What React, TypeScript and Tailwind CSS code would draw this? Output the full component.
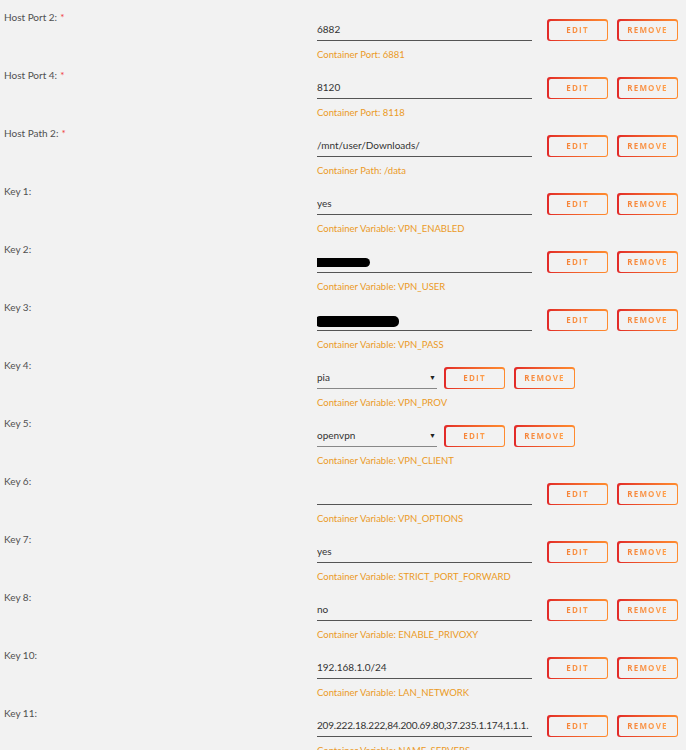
import React from 'react';

type Field = {
  label: string;
  required?: boolean;
  value?: string;
  redacted?: 'short' | 'long';
  select?: boolean;
  tight?: boolean;
  note: string;
};

const fields: Field[] = [
  { label: 'Host Port 2:', required: true, value: '6882', note: 'Container Port: 6881' },
  { label: 'Host Port 4:', required: true, value: '8120', note: 'Container Port: 8118' },
  { label: 'Host Path 2:', required: true, value: '/mnt/user/Downloads/', note: 'Container Path: /data' },
  { label: 'Key 1:', value: 'yes', note: 'Container Variable: VPN_ENABLED' },
  { label: 'Key 2:', redacted: 'short', note: 'Container Variable: VPN_USER' },
  { label: 'Key 3:', redacted: 'long', note: 'Container Variable: VPN_PASS' },
  { label: 'Key 4:', value: 'pia', select: true, note: 'Container Variable: VPN_PROV' },
  { label: 'Key 5:', value: 'openvpn', select: true, note: 'Container Variable: VPN_CLIENT' },
  { label: 'Key 6:', value: '', note: 'Container Variable: VPN_OPTIONS' },
  { label: 'Key 7:', value: 'yes', note: 'Container Variable: STRICT_PORT_FORWARD' },
  { label: 'Key 8:', value: 'no', note: 'Container Variable: ENABLE_PRIVOXY' },
  { label: 'Key 10:', value: '192.168.1.0/24', note: 'Container Variable: LAN_NETWORK' },
  {
    label: 'Key 11:',
    value: '209.222.18.222,84.200.69.80,37.235.1.174,1.1.1.',
    tight: true,
    note: 'Container Variable: NAME_SERVERS',
  },
];

const OutlineButton: React.FC<{ children: React.ReactNode }> = ({ children }) => (
  <button className="h-[22px] w-[61px] rounded-[3px] bg-gradient-to-r from-[#e22828] to-[#ff8c2f] p-[1.5px]">
    <span className="flex h-full w-full items-center justify-center rounded-[2px] bg-[#f2f2f2]">
      <span className="bg-gradient-to-r from-[#f5843a] to-[#ffa04c] bg-clip-text font-['Open_Sans',sans-serif] text-[8px] font-bold tracking-[1.2px] text-transparent">
        {children}
      </span>
    </span>
  </button>
);

const Row: React.FC<{ field: Field }> = ({ field }) => (
  <div className="flex h-[58px]">
    <div className="w-[317px] shrink-0 pl-[4px] pt-[11px] text-[10px] leading-[12px] text-[#505050]">
      {field.label}
      {field.required && <span className="ml-[3px] text-[#f03c3c]">*</span>}
    </div>
    <div className="pt-[19px]">
      <div className="flex h-[22px] items-start">
        {field.select ? (
          <div className="flex h-[22px] w-[120px] items-center justify-between border-b border-[#888] text-[10px] text-[#333]">
            <span>{field.value}</span>
            <span className="mr-[1px] text-[7px] text-[#222]">▼</span>
          </div>
        ) : (
          <div
            className={`flex h-[22px] w-[215px] items-center overflow-hidden whitespace-nowrap border-b border-[#555] text-[10px] text-[#333] ${
              field.tight ? 'tracking-[-0.2px]' : ''
            }`}
          >
            {field.redacted === 'short' && (
              <span className="mt-[1px] block h-[9px] w-[55px] -translate-x-[2px] rounded-l-[5px] rounded-r-full bg-black" />
            )}
            {field.redacted === 'long' && (
              <span className="mt-[4px] block h-[11px] w-[84px] -translate-x-[2px] rounded-[5px] bg-black" />
            )}
            {!field.redacted && field.value}
          </div>
        )}
        <div className={`flex gap-[9px] ${field.select ? 'ml-[7px]' : 'ml-[15px]'}`}>
          <OutlineButton>EDIT</OutlineButton>
          <OutlineButton>REMOVE</OutlineButton>
        </div>
      </div>
      <div className="mt-[8px] text-[9.5px] leading-[12px] text-[#eb9a26]">{field.note}</div>
    </div>
  </div>
);

export default function App() {
  return (
    <div className="h-[750px] w-[686px] overflow-hidden bg-[#f2f2f2] font-['Lato',sans-serif]">
      {fields.map((f) => (
        <Row key={f.label} field={f} />
      ))}
    </div>
  );
}
